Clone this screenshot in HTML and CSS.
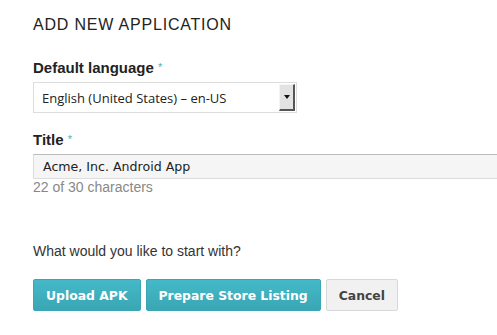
FILE: index.html
```html
<!DOCTYPE html>
<html lang="en">
<head>
  <meta charset="UTF-8">
  <title>Add New Application</title>
  <link rel="stylesheet" href="styles.css">
</head>
<body>
  <div class="app-form">
    <h1 class="form-title">ADD NEW APPLICATION</h1>

    <div class="field">
      <label class="field-label">Default language <span class="req">*</span></label>
      <div class="select-box">
        <span class="select-value">English (United States) – en-US</span>
        <span class="select-arrow"><span class="tri"></span></span>
      </div>
    </div>

    <div class="field">
      <label class="field-label">Title <span class="req">*</span></label>
      <div class="text-input">Acme, Inc. Android App</div>
      <div class="char-count">22 of 30 characters</div>
    </div>

    <p class="start-q">What would you like to start with?</p>

    <div class="actions">
      <button class="btn btn-primary">Upload APK</button>
      <button class="btn btn-primary">Prepare Store Listing</button>
      <button class="btn btn-cancel">Cancel</button>
    </div>
  </div>
</body>
</html>
```

FILE: styles.css
```css
* { margin: 0; padding: 0; box-sizing: border-box; }
body {
  font-family: 'Liberation Sans', Arial, sans-serif;
  background: #fff;
  color: #222;
  overflow: hidden;
}
.app-form {
  padding: 16px 0 0 33px;
}
.form-title {
  font-size: 16px;
  font-weight: 400;
  letter-spacing: 0.8px;
  color: #222;
  line-height: 18px;
  margin-bottom: 25px;
}
.field { margin-bottom: 18px; }
.field-label {
  display: block;
  font-size: 15px;
  font-weight: 700;
  color: #222;
  line-height: 17px;
  margin-bottom: 6px;
}
.req { color: #40b5c5; font-weight: 400; font-size: 11px; vertical-align: top; }
.select-box {
  width: 264px;
  height: 31px;
  border: 1px solid #ddd;
  display: flex;
  align-items: center;
  justify-content: space-between;
  padding: 1px 1px 1px 8px;
}
.select-value {
  font-family: 'Open Sans', sans-serif;
  font-size: 13px;
  color: #222;
}
.select-arrow {
  width: 16px;
  height: 27px;
  background: #e2e2e2;
  border-top: 1px solid #f4f4f4;
  border-left: 1px solid #f4f4f4;
  border-right: 2px solid #555;
  border-bottom: 2px solid #555;
  display: flex;
  align-items: center;
  justify-content: center;
}
.tri {
  width: 0;
  height: 0;
  border-left: 3px solid transparent;
  border-right: 3px solid transparent;
  border-top: 4px solid #111;
}
.text-input {
  height: 25px;
  margin-right: -10px;
  background: #f5f5f5;
  border-top: 1px solid #bbb;
  border-bottom: 1px solid #ddd;
  border-left: 1px solid #ddd;
  padding: 0 9px;
  font-family: 'DejaVu Sans', sans-serif;
  font-size: 12.6px;
  line-height: 23px;
  color: #222;
}
.char-count {
  font-size: 14px;
  color: #888;
  line-height: 16px;
}
.start-q {
  font-size: 14px;
  color: #333;
  line-height: 16px;
  margin-top: 48px;
  margin-bottom: 20px;
}
.actions { display: flex; gap: 5px; }
.btn {
  height: 32px;
  padding: 0 12px;
  border-radius: 2px;
  font-family: 'DejaVu Sans', sans-serif;
  font-weight: 700;
  font-size: 12.4px;
  cursor: pointer;
}
.btn-primary {
  background: linear-gradient(#44b9c8, #3aa6b3);
  border: 1px solid #3aa6b3;
  color: #fff;
}
.btn-cancel {
  background: #f1f1f1;
  border: 1px solid #d8d8d8;
  color: #444;
}
```
